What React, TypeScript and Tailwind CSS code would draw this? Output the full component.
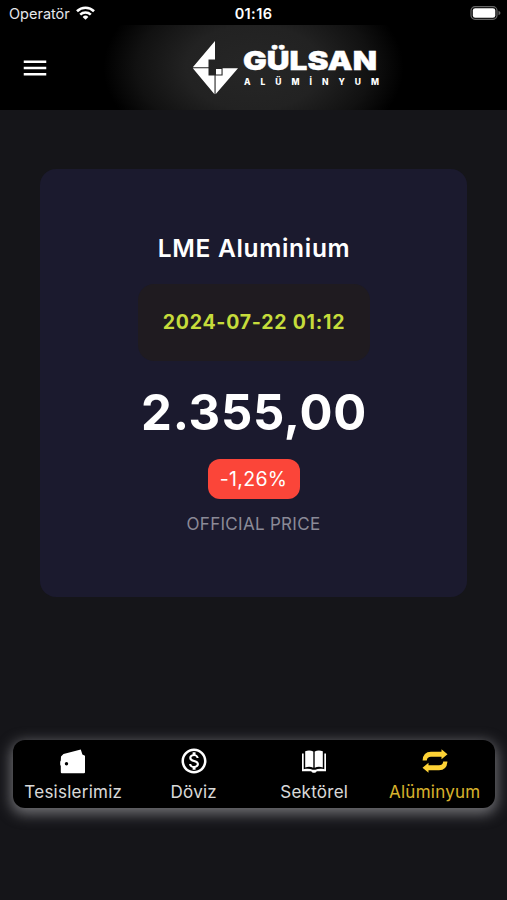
import { MdMenu, MdOutlineMonetizationOn } from "react-icons/md";

interface NavItem {
  label: string;
  icon: React.ReactNode;
  active?: boolean;
}

const WalletIcon = () => (
  <svg className="h-[25px] w-[26px]" viewBox="0 0 26 25" fill="currentColor">
    <path d="M1 7.500 3.500 5 20.800.5l1.600 5L25 6.800v16.400a1 1 0 0 1-1 1H1.800a1 1 0 0 1-1-1V17L.2 15.700v-3L.8 11.500z" />
    <circle cx="6.500" cy="14.700" r="1.700" fill="#000" />
  </svg>
);

const BookIcon = () => (
  <svg className="h-[23px] w-[24px]" viewBox="0 0 24 23" fill="currentColor">
    <path d="M3.200 1.200C6 .2 9 .2 11.300 1.600v16.200C9 16.600 6 16.600 3.200 17.400z" />
    <path d="M20.800 1.200C18 .2 15 .2 12.700 1.600v16.200c2.300-1.200 5.300-1.200 8.100-.4z" />
    <path d="M0 3.500h1.700v15.700c3.500-.7 6.500-.6 8.900.6h2.800c2.400-1.200 5.400-1.300 8.900-.6V3.500H24v17.700h-9.300c-.5 1-1.500 1.500-2.700 1.500s-2.200-.5-2.700-1.500H0z" />
  </svg>
);

const LoopIcon = () => (
  <svg className="h-[24px] w-[26px]" viewBox="0 0 26 24" fill="currentColor">
    <path d="M19.500.3 25.500 5.300l-6 4.900V7.800H9q-3.800 0-4.200 3.700H.6Q1 2.900 9 2.800h10.500z" />
    <path d="M6.500 23.700.5 18.700l6-4.900v2.400H17q3.800 0 4.200-3.700h4.200q-.4 8.600-8.400 8.700H6.500z" />
  </svg>
);

const navItems: NavItem[] = [
  { label: "Tesislerimiz", icon: <WalletIcon /> },
  { label: "Döviz", icon: <MdOutlineMonetizationOn size={30} /> },
  { label: "Sektörel", icon: <BookIcon /> },
  { label: "Alüminyum", icon: <LoopIcon />, active: true },
];

function StatusBar() {
  return (
    <div className="grid h-[25px] grid-cols-3 items-center bg-black pt-[2px] text-white">
      <div className="flex items-center gap-[6px] pl-[9px] text-[14.500px] text-gray-200">
        <span>Operatör</span>
        <svg className="mb-[2px] h-[14px] w-[19px]" viewBox="0 0 19 14" fill="none" stroke="#fff" strokeWidth="2.600">
          <path d="M1 5.200a12.200 12.200 0 0 1 17 0" />
          <path d="M4.200 8.600a7.700 7.700 0 0 1 10.600 0" />
          <path d="M9.500 13.800 6.600 10.900a4.200 4.200 0 0 1 5.800 0z" fill="#fff" stroke="none" />
        </svg>
      </div>
      <div className="text-center text-[14.500px] font-semibold tracking-[0.4px]">01:16</div>
      <div className="flex justify-end pr-[6px]">
        <svg className="mb-[2px] h-[14px] w-[31px]" viewBox="0 0 31 14">
          <rect x="1" y=".7" width="26" height="12.600" rx="4" fill="none" stroke="#666" strokeWidth="1.200" />
          <rect x="2.800" y="2.200" width="22.500" height="9.600" rx="2.400" fill="#fff" />
          <path d="M28.500 4.700q2 .8 2 2.300t-2 2.300z" fill="#666" />
        </svg>
      </div>
    </div>
  );
}

function Logo() {
  return (
    <svg className="h-[56px] w-[188px]" viewBox="0 0 188 56" fill="#fff">
      <path d="M23 1v18.500h-6.500v7.800H.8z" />
      <path d="M.8 28.300h15.700v7.200h6v18.800z" />
      <path d="M23.600 54.300V35.500h7v-7.200H46z" />
      <rect x="24" y="29" width="5.500" height="5.500" />
      <text
        x="51"
        y="30"
        fontSize="26"
        fontWeight="900"
        textLength="134"
        lengthAdjust="spacingAndGlyphs"
        stroke="#fff"
        strokeWidth=".4"
      >
        GÜLSAN
      </text>
      <text x="52" y="45" fontSize="8.500" fontWeight="800" textLength="135" lengthAdjust="spacing">
        ALÜMİNYUM
      </text>
    </svg>
  );
}

function Header() {
  return (
    <header className="flex h-[85px] items-center bg-black bg-[radial-gradient(ellipse_150px_95px_at_50%_50%,#262626_0%,#222_45%,#111_78%,#000_100%)] pl-[20px]">
      <MdMenu size={30} className="text-white" />
      <div className="pl-[142px]">
        <Logo />
      </div>
    </header>
  );
}

function PriceCard() {
  return (
    <section className="mx-[40px] mt-[59px] flex h-[428px] flex-col items-center rounded-[16px] bg-[#1b1a2e] pt-[63px]">
      <h1 className="pl-[1px] text-[24.500px] leading-[32px] font-semibold tracking-[0.7px] text-white">
        LME Aluminium
      </h1>
      <div className="mt-[20px] flex h-[77px] w-[232px] items-center justify-center rounded-[16px] bg-[#1f1b20] pl-[1px] text-[19.500px] font-bold tracking-[0.75px] text-[#c6dc3b]">
        2024-07-22 01:12
      </div>
      <div className="mt-[21px] pl-[1px] text-[49px] leading-[62px] font-bold tracking-[0.7px] text-white">2.355,00</div>
      <div className="mt-[15px] flex h-[40px] w-[92px] items-center justify-center rounded-[12px] bg-[#fb4539] pt-[1px] text-[19.500px] tracking-[0.3px] text-white">
        -1,26%
      </div>
      <p className="mt-[13px] text-[17px] leading-[24px] tracking-[0.3px] text-[#8b8a97]">OFFICIAL PRICE</p>
    </section>
  );
}

function BottomNav() {
  return (
    <nav className="mr-[12px] ml-[13px] mt-[143px] grid h-[68px] grid-cols-4 rounded-[12px] bg-black shadow-[0_4px_14px_2px_#707074]">
      {navItems.map((item) => (
        <div
          key={item.label}
          className={`flex flex-col items-center pt-[6px] ${item.active ? "text-[#fdd235]" : "text-white"}`}
        >
          <div className="flex h-[30px] items-center">{item.icon}</div>
          <span className="pt-[1px] text-[17px] leading-[30px] tracking-[0.25px] opacity-85">{item.label}</span>
        </div>
      ))}
    </nav>
  );
}

export default function App() {
  return (
    <div className="h-[900px] w-[507px] overflow-hidden bg-[#151519] font-['Inter',sans-serif]">
      <StatusBar />
      <Header />
      <PriceCard />
      <BottomNav />
    </div>
  );
}
